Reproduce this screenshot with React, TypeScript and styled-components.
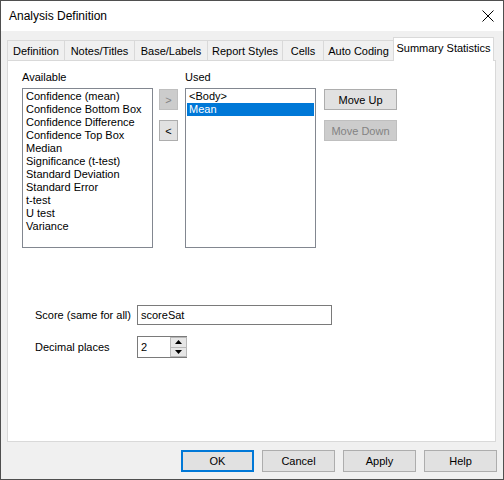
import React from 'react';
import styled, { createGlobalStyle, css } from 'styled-components';

const GlobalStyle = createGlobalStyle`
  html, body {
    margin: 0;
    padding: 0;
    background: #ffffff;
  }
  * {
    box-sizing: border-box;
  }
`;

const Window = styled.div`
  width: 504px;
  height: 480px;
  border: 1px solid #4f4f4f;
  background: #f0f0f0;
  display: flex;
  flex-direction: column;
  font-family: "Liberation Sans", Arial, sans-serif;
  font-size: 11px;
  color: #000;
`;

const TitleBar = styled.div`
  height: 30px;
  background: #ffffff;
  display: flex;
  align-items: center;
  justify-content: space-between;
  padding: 0 9px 0 8px;
  font-size: 12px;
`;

const Body = styled.div`
  flex: 1;
  display: flex;
  flex-direction: column;
  padding: 6px 7px 0 6px;
`;

const TabRow = styled.div`
  display: flex;
  align-items: flex-end;
  height: 23px;
`;

const Tab = styled.div<{ $w: number; $active?: boolean }>`
  width: ${(p) => p.$w}px;
  height: 20px;
  margin-right: -1px;
  border: 1px solid #d9d9d9;
  border-bottom: none;
  background: #f0f0f0;
  display: flex;
  align-items: center;
  justify-content: center;
  padding-top: 1px;
  white-space: nowrap;
  ${(p) =>
    p.$active &&
    css`
      height: 24px;
      margin-bottom: -1px;
      background: #ffffff;
      position: relative;
      z-index: 1;
      padding-top: 0;
      padding-bottom: 3px;
    `}
`;

const Panel = styled.div`
  height: 382px;
  border: 1px solid #d9d9d9;
  background: #ffffff;
  padding: 10px 0 0 14px;
  display: flex;
  flex-direction: column;
`;

const Lists = styled.div`
  display: flex;
  align-items: flex-start;
`;

const Column = styled.div<{ $w: number; $ml?: number; $mt?: number; $gap?: number }>`
  width: ${(p) => p.$w}px;
  margin-left: ${(p) => p.$ml ?? 0}px;
  margin-top: ${(p) => p.$mt ?? 0}px;
  display: flex;
  flex-direction: column;
  gap: ${(p) => p.$gap ?? 0}px;
`;

const Label = styled.div`
  height: 13px;
  line-height: 13px;
  margin-bottom: 4px;
`;

const ListBox = styled.div`
  height: 160px;
  border: 1px solid #828790;
  padding: 1px;
  background: #fff;
`;

const Item = styled.div<{ $selected?: boolean }>`
  height: 13px;
  line-height: 13px;
  padding-left: 2px;
  white-space: nowrap;
  background: ${(p) => (p.$selected ? '#0078d7' : 'transparent')};
  color: ${(p) => (p.$selected ? '#ffffff' : '#000000')};
`;

const Button = styled.div<{ $w: number; $h?: number; $disabled?: boolean; $default?: boolean }>`
  width: ${(p) => p.$w}px;
  height: ${(p) => p.$h ?? 21}px;
  border: 1px solid ${(p) => (p.$disabled ? '#bfbfbf' : '#adadad')};
  background: ${(p) => (p.$disabled ? '#cccccc' : '#e1e1e1')};
  color: ${(p) => (p.$disabled ? '#838383' : '#000000')};
  display: flex;
  align-items: center;
  justify-content: center;
  ${(p) =>
    p.$default &&
    css`
      border: 2px solid #0078d7;
    `}
`;

const Form = styled.div`
  margin-top: 57px;
  padding-left: 13px;
  display: flex;
  flex-direction: column;
  gap: 11px;
`;

const FormRow = styled.div`
  display: flex;
  align-items: center;
`;

const FieldLabel = styled.div`
  width: 102px;
`;

const TextBox = styled.div<{ $w: number; $h: number }>`
  width: ${(p) => p.$w}px;
  height: ${(p) => p.$h}px;
  border: 1px solid #7a7a7a;
  background: #fff;
  padding-left: 3px;
  display: flex;
  align-items: center;
  justify-content: space-between;
`;

const Spin = styled.div`
  width: 17px;
  height: 20px;
  display: flex;
  flex-direction: column;
  margin-right: -1px;
`;

const SpinButton = styled.div`
  flex: 1;
  border: 1px solid #b8b8b8;
  background: #e6e6e6;
  display: flex;
  align-items: center;
  justify-content: center;
  & + & {
    margin-top: -1px;
  }
`;

const Footer = styled.div`
  display: flex;
  justify-content: flex-end;
  gap: 8px;
  padding: 8px 0 0 0;
  margin-right: -1px;
`;

const Arrow = ({ up }: { up?: boolean }) => (
  <svg width="7" height="4" viewBox="0 0 7 4">
    <polygon points={up ? '0,4 7,4 3.5,0' : '0,0 7,0 3.5,4'} fill="#000" />
  </svg>
);

const available = [
  'Confidence (mean)',
  'Confidence Bottom Box',
  'Confidence Difference',
  'Confidence Top Box',
  'Median',
  'Significance (t-test)',
  'Standard Deviation',
  'Standard Error',
  't-test',
  'U test',
  'Variance',
];

const tabs: [string, number][] = [
  ['Definition', 58],
  ['Notes/Titles', 71],
  ['Base/Labels', 74],
  ['Report Styles', 76],
  ['Cells', 42],
  ['Auto Coding', 71],
  ['Summary Statistics', 101],
];

const App = () => {
  return (
    <>
      <GlobalStyle />
      <Window>
        <TitleBar>
          <span>Analysis Definition</span>
          <svg width="12" height="12" viewBox="0 0 12 12">
            <path d="M0.5 0.5 L11.5 11.5 M11.5 0.5 L0.5 11.5" stroke="#000" strokeWidth="1" />
          </svg>
        </TitleBar>
        <Body>
          <TabRow>
            {tabs.map(([name, w], i) => (
              <Tab key={name} $w={w} $active={i === tabs.length - 1}>
                {name}
              </Tab>
            ))}
          </TabRow>
          <Panel>
            <Lists>
              <Column $w={131}>
                <Label>Available</Label>
                <ListBox>
                  {available.map((a) => (
                    <Item key={a}>{a}</Item>
                  ))}
                </ListBox>
              </Column>
              <Column $w={19} $ml={6} $mt={18} $gap={10}>
                <Button $w={19} $disabled>&gt;</Button>
                <Button $w={19}>&lt;</Button>
              </Column>
              <Column $w={131} $ml={7}>
                <Label>Used</Label>
                <ListBox>
                  <Item>&lt;Body&gt;</Item>
                  <Item $selected>Mean</Item>
                </ListBox>
              </Column>
              <Column $w={73} $ml={8} $mt={18} $gap={10}>
                <Button $w={73}>Move Up</Button>
                <Button $w={73} $disabled>Move Down</Button>
              </Column>
            </Lists>
            <Form>
              <FormRow>
                <FieldLabel>Score (same for all)</FieldLabel>
                <TextBox $w={195} $h={20}>scoreSat</TextBox>
              </FormRow>
              <FormRow>
                <FieldLabel>Decimal places</FieldLabel>
                <TextBox $w={50} $h={22}>
                  2
                  <Spin>
                    <SpinButton>
                      <Arrow up />
                    </SpinButton>
                    <SpinButton>
                      <Arrow />
                    </SpinButton>
                  </Spin>
                </TextBox>
              </FormRow>
            </Form>
          </Panel>
          <Footer>
            <Button $w={73} $h={22} $default>OK</Button>
            <Button $w={73} $h={22}>Cancel</Button>
            <Button $w={73} $h={22}>Apply</Button>
            <Button $w={73} $h={22}>Help</Button>
          </Footer>
        </Body>
      </Window>
    </>
  );
};

export default App;
